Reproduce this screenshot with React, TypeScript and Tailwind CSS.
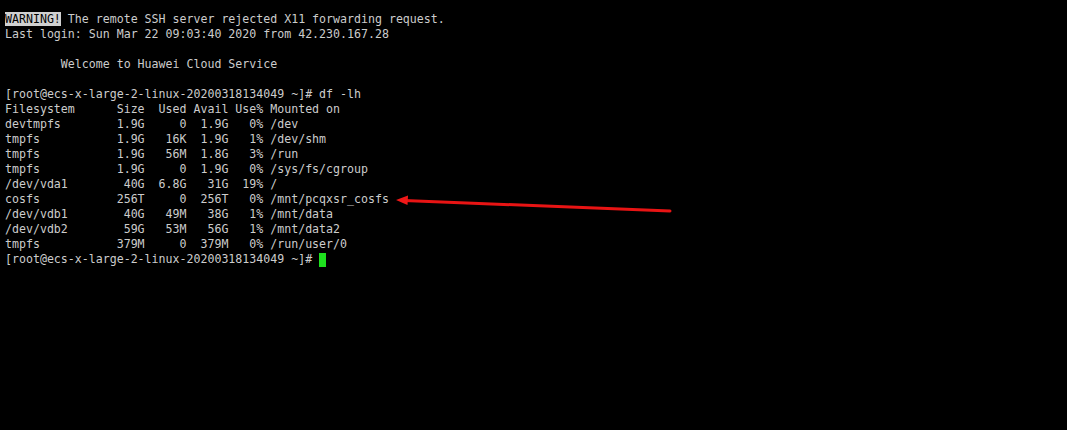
const rows = [
  "Filesystem      Size  Used Avail Use% Mounted on",
  "devtmpfs        1.9G     0  1.9G   0% /dev",
  "tmpfs           1.9G   16K  1.9G   1% /dev/shm",
  "tmpfs           1.9G   56M  1.8G   3% /run",
  "tmpfs           1.9G     0  1.9G   0% /sys/fs/cgroup",
  "/dev/vda1        40G  6.8G   31G  19% /",
  "cosfs           256T     0  256T   0% /mnt/pcqxsr_cosfs",
  "/dev/vdb1        40G   49M   38G   1% /mnt/data",
  "/dev/vdb2        59G   53M   56G   1% /mnt/data2",
  "tmpfs           379M     0  379M   0% /run/user/0",
];

const prompt = "[root@ecs-x-large-2-linux-20200318134049 ~]# ";

export default function App() {
  return (
    <div className="relative w-[1067px] h-[430px] bg-black overflow-hidden">
      <pre
        className="pl-[5px] pt-[12px] text-[11.6px] leading-[15px] text-[#cccccc] whitespace-pre"
        style={{ fontFamily: '"DejaVu Sans Mono", monospace' }}
      >
        <div>
          <span className="bg-[#d0d0d0] text-black">WARNING!</span> The remote SSH server rejected X11 forwarding request.
        </div>
        <div>Last login: Sun Mar 22 09:03:40 2020 from 42.230.167.28</div>
        <div>&nbsp;</div>
        <div>        Welcome to Huawei Cloud Service</div>
        <div>&nbsp;</div>
        <div>{prompt}df -lh</div>
        {rows.map((r, i) => (
          <div key={i}>{r}</div>
        ))}
        <div className="flex items-center">
          <span>{prompt}</span>
          <span className="inline-block w-[7px] h-[14px] bg-[#1ee01e]" />
        </div>
      </pre>
      <svg className="absolute left-0 top-0" width="1067" height="430">
        <line x1="404" y1="200.5" x2="670" y2="211" stroke="#e81414" strokeWidth="3" strokeLinecap="round" />
        <polygon points="396,200 408,195.5 407.5,205" fill="#f01818" />
      </svg>
    </div>
  );
}
